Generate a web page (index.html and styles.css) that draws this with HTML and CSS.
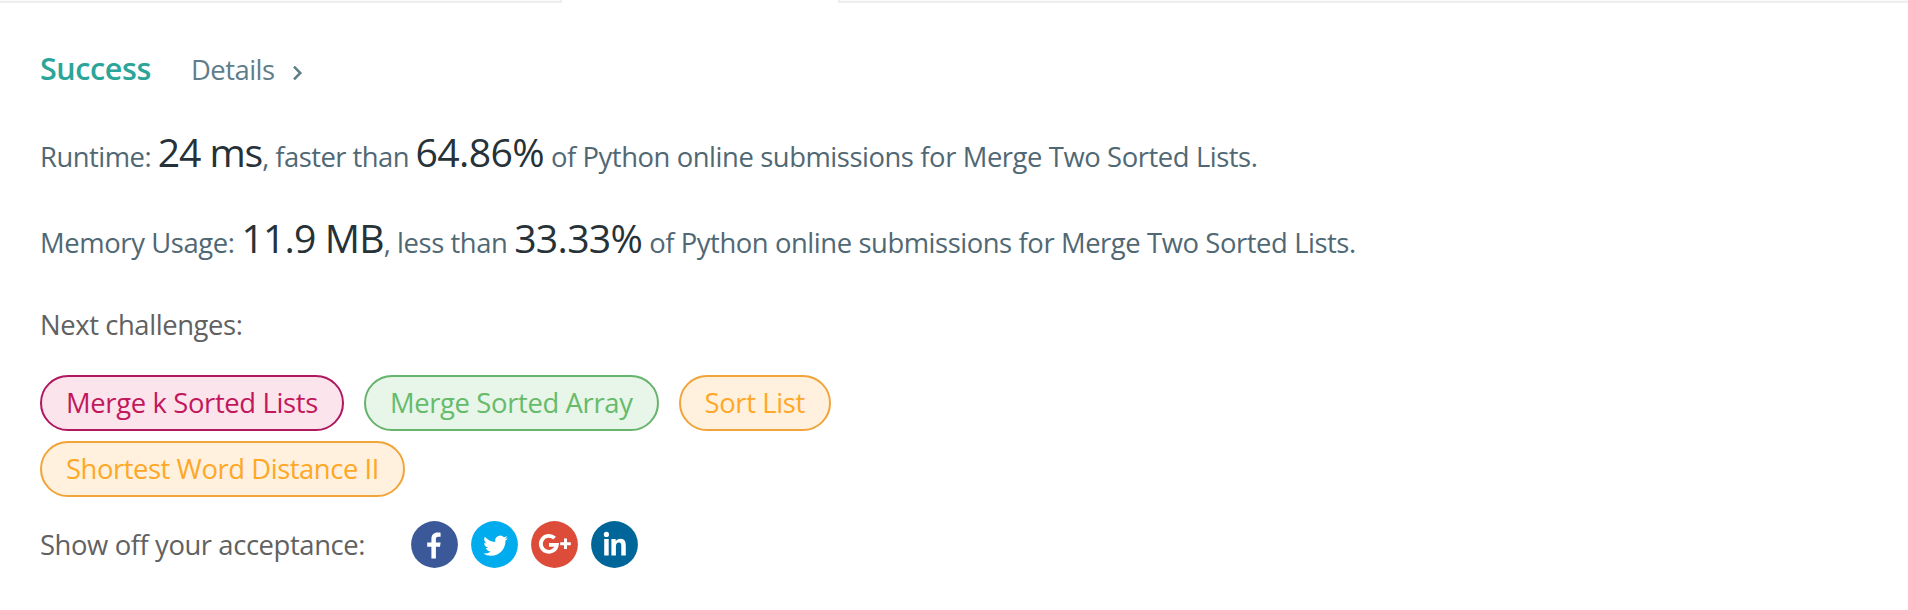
FILE: index.html
```html
<!DOCTYPE html>
<html lang="en">
<head>
<meta charset="utf-8">
<title>Submission result</title>
<link rel="stylesheet" href="styles.css">
</head>
<body>
<div class="tabs"><div class="tab-edge tab-left"></div><div class="tab-edge tab-right"></div></div>
<main class="result">
  <div class="status">
    <span class="success">Success</span>
    <a class="details">Details</a>
    <svg class="chevron" width="11" height="15" viewBox="0 0 11 15"><path d="M2 1.6 8.3 8 2 14.4"/></svg>
  </div>
  <p class="stat runtime"><span class="label">Runtime: </span><span class="value">24 ms</span><span class="mid">, faster than </span><span class="value pct">64.86%</span><span class="tail"> of Python online submissions for Merge Two Sorted Lists.</span></p>
  <p class="stat memory"><span class="label">Memory Usage: </span><span class="value">11.9 MB</span><span class="mid">, less than </span><span class="value pct">33.33%</span><span class="tail"> of Python online submissions for Merge Two Sorted Lists.</span></p>
  <p class="next">Next challenges:</p>
  <div class="challenges">
    <a class="pill hard">Merge k Sorted Lists</a>
    <a class="pill easy">Merge Sorted Array</a>
    <a class="pill medium">Sort List</a>
    <a class="pill medium word">Shortest Word Distance II</a>
  </div>
  <div class="share">
    <span class="share-label">Show off your acceptance:</span>
    <svg class="social" viewBox="0 0 47 47"><circle cx="23.5" cy="23.5" r="23.4" fill="#3b5998"/><path fill="#fff" d="M20.4 37.5V25.8h-4.2v-4.3h4.2v-3.4c0-4.3 2.5-6.5 6.2-6.5 1.5 0 2.6.1 3 .2v4h-2.4c-1.9 0-2.3 1-2.3 2.4v3.3h4.7l-.6 4.3h-4.1v11.7z"/></svg>
    <svg class="social" viewBox="0 0 47 47"><circle cx="23.5" cy="23.5" r="23.4" fill="#00aced"/><path fill="#fff" transform="translate(12.2 12.4) scale(1.03)" d="M23.95 4.57a10 10 0 0 1-2.82.77 4.96 4.96 0 0 0 2.16-2.72c-.95.55-2 .96-3.13 1.18a4.92 4.92 0 0 0-8.38 4.48C7.69 8.1 4.07 6.13 1.64 3.16a4.92 4.92 0 0 0 1.52 6.57 4.9 4.9 0 0 1-2.23-.61v.06a4.92 4.92 0 0 0 3.95 4.83 5 5 0 0 1-2.21.08 4.94 4.94 0 0 0 4.6 3.42A9.87 9.87 0 0 1 0 19.54a14 14 0 0 0 7.55 2.21c9.05 0 14-7.5 14-13.98 0-.21 0-.42-.02-.63a9.9 9.9 0 0 0 2.42-2.57z"/></svg>
    <svg class="social" viewBox="0 0 47 47"><circle cx="23.5" cy="23.5" r="23.4" fill="#dd4b39"/><path fill="none" stroke="#fff" stroke-width="3.8" d="M23.6 17.2A8 8 0 1 0 25.8 23.9H18"/><path stroke="#fff" stroke-width="3" d="M29.2 22.8h10.6M34.5 17.5v10.6"/></svg>
    <svg class="social" viewBox="0 0 47 47"><circle cx="23.5" cy="23.5" r="23.4" fill="#069"/><g fill="#fff"><circle cx="15.4" cy="13.4" r="2.6"/><path d="M13.2 18h4.5v16.4h-4.5zM20.4 18h4.3v2.3c.9-1.6 2.6-2.6 4.7-2.6 4.5 0 5.4 2.9 5.4 7v9.7h-4.5v-8.8c0-2-.1-4-2.5-4-2.3 0-2.9 1.8-2.9 4v8.8h-4.5z"/></g></svg>
  </div>
</main>
</body>
</html>
```
FILE: styles.css
```css
* { box-sizing: border-box; }
body {
  margin: 0;
  background: #fff;
  color: #616161;
  font-family: "Open Sans", "Noto Sans", sans-serif;
  font-size: 27.4px;
  line-height: 40px;
  letter-spacing: -0.4px;
}
.tabs { display: flex; justify-content: space-between; height: 3px; }
.tab-edge { background: #fafafa; border-bottom: 2px solid #eee; }
.tab-left { width: 562px; border-right: 2px solid #eee; }
.tab-right { width: 1070px; border-left: 2px solid #eee; }
.result { padding: 45px 40px 0; }
.status { display: flex; align-items: baseline; height: 40px; }
.success { color: #2ba599; font-size: 30.5px; font-weight: 600; }
.details { color: #607d8b; margin-left: 40px; letter-spacing: -0.5px; }
.chevron { margin-left: 17px; fill: none; stroke: #607d8b; stroke-width: 2.5; }
.stat { margin: 36px 0 0; height: 50px; line-height: 50px; color: #506874; white-space: pre; }
.runtime { margin-top: 39px; }
.value { color: #263238; font-size: 39.2px; }
.runtime .label { letter-spacing: -0.5px; }
.runtime .value { letter-spacing: -1.1px; }
.runtime .mid { letter-spacing: -0.54px; }
.runtime .pct { letter-spacing: -0.63px; }
.memory .label { letter-spacing: -0.38px; }
.memory .value { letter-spacing: -0.84px; }
.memory .mid { letter-spacing: -0.42px; }
.memory .pct { letter-spacing: -0.7px; }
.tail { letter-spacing: -0.45px; word-spacing: 0.2px; }
.next { margin: 42px 0 0; }
.challenges { display: flex; flex-wrap: wrap; gap: 10px 20px; width: 880px; margin-top: 30px; }
.pill { height: 56px; padding: 0 24px; border: 2px solid; border-radius: 28px; line-height: 52px; letter-spacing: -0.35px; }
.word { letter-spacing: -0.44px; }
.hard { color: #c2185b; background: #fce4ec; border-color: #b0185f; }
.easy { color: #66bb6a; background: #e8f5e9; border-color: #66b36c; }
.medium { color: #ffa726; background: #fff1de; border-color: #f0a43a; }
.share { display: flex; align-items: center; height: 47px; margin-top: 24px; }
.social { width: 47px; height: 47px; margin-right: 13px; }
.share-label { margin-right: 46px; }
```
